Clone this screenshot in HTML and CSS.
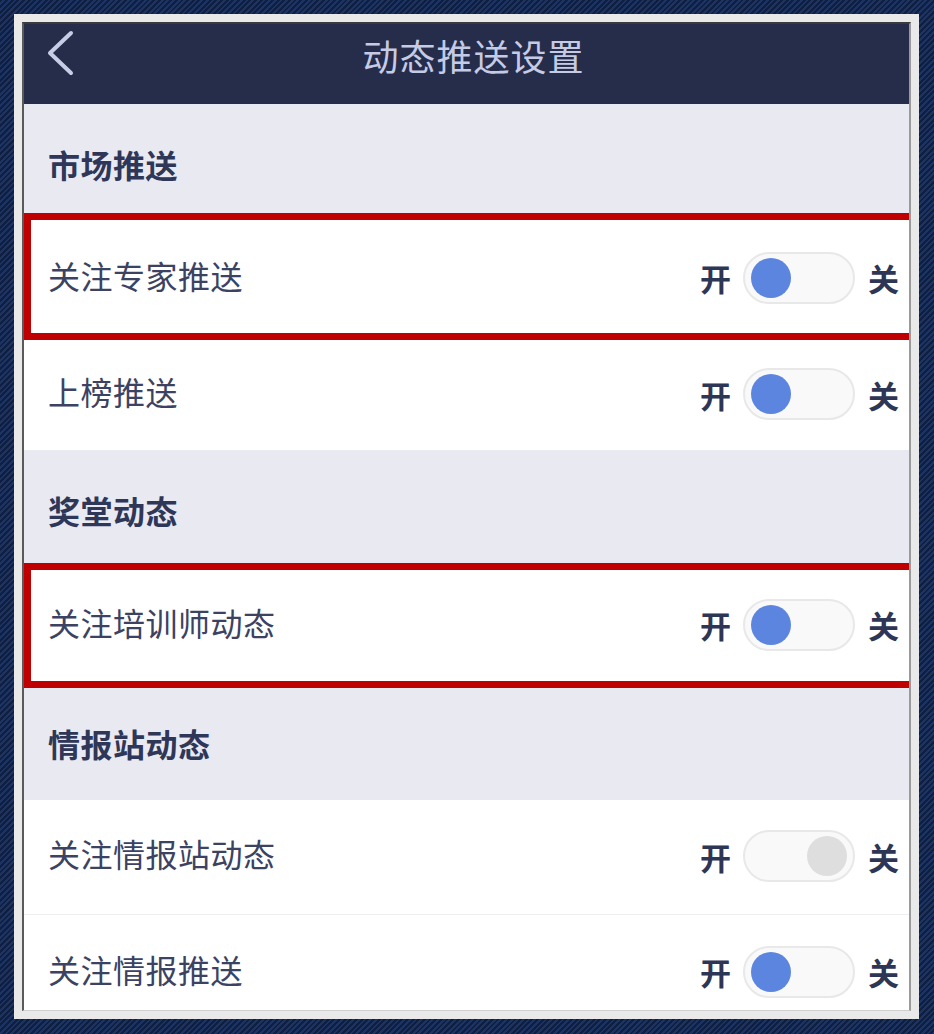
FILE: index.html
```html
<!DOCTYPE html>
<html lang="zh-CN">
<head>
<meta charset="utf-8">
<title>动态推送设置</title>
<link rel="stylesheet" href="styles.css">
</head>
<body>
<div class="frame">
  <div class="app">
    <header class="topbar">
      <svg class="back" width="30" height="46" viewBox="0 0 30 46"><path d="M26 3 L5 23 L26 43" fill="none" stroke="#c8cde6" stroke-width="4" stroke-linecap="round" stroke-linejoin="round"/></svg>
      <h1 class="title">动态推送设置</h1>
    </header>
    <div class="list">
      <div class="section s1">市场推送</div>
      <div class="row r1 hl"><span class="label">关注专家推送</span><div class="sw"><span class="k">开</span><span class="track on"><span class="knob"></span></span><span class="k">关</span></div></div>
      <div class="row r2"><span class="label">上榜推送</span><div class="sw"><span class="k">开</span><span class="track on"><span class="knob"></span></span><span class="k">关</span></div></div>
      <div class="section s2">奖堂动态</div>
      <div class="row r3 hl"><span class="label">关注培训师动态</span><div class="sw"><span class="k">开</span><span class="track on"><span class="knob"></span></span><span class="k">关</span></div></div>
      <div class="section s3">情报站动态</div>
      <div class="row r4 divided"><span class="label">关注情报站动态</span><div class="sw"><span class="k">开</span><span class="track off"><span class="knob"></span></span><span class="k">关</span></div></div>
      <div class="row r5"><span class="label">关注情报推送</span><div class="sw"><span class="k">开</span><span class="track on"><span class="knob"></span></span><span class="k">关</span></div></div>
    </div>
  </div>
</div>
</body>
</html>
```
FILE: styles.css
```css
* { box-sizing: border-box; }
html, body { margin: 0; height: 100%; }
body {
  width: 934px;
  height: 1034px;
  padding: 14px 15px 15px 14px;
  background: repeating-linear-gradient(135deg, #0e1f42 0 2px, #1d3361 2px 4px);
  font-family: "Noto Sans CJK SC", "Noto Sans", sans-serif;
  overflow: hidden;
}
.frame {
  height: 1005px;
  background: #e9e9e9;
  padding: 8px;
}
.app {
  height: 100%;
  border-left: 2px solid #5a5a5a;
  border-top: 2px solid #3a3a3a;
  border-right: 2px solid #9a9a9a;
  border-bottom: 1px solid #d0d0d0;
  overflow: hidden;
  display: flex;
  flex-direction: column;
  background: #fff;
}
.topbar {
  height: 80px;
  flex: none;
  background: #252d4b;
  display: flex;
  align-items: center;
  justify-content: center;
  position: relative;
}
.back { position: absolute; left: 21px; top: 6px; }
.title {
  margin: -18px 0 0 14px;
  font-size: 36px;
  font-weight: 400;
  color: #c6cbe5;
  letter-spacing: 1px;
}
.list { display: flex; flex-direction: column; flex: 1; min-height: 0; }
.section {
  background: #e9e9f2;
  color: #2f3758;
  font-size: 32px;
  letter-spacing: 0.5px;
  font-weight: 700;
  padding-left: 24px;
  display: flex;
  align-items: center;
  flex: none;
}
.s1 { height: 109px; padding-top: 10px; }
.s2 { height: 113px; padding-top: 6px; }
.s3 { height: 112px; padding-bottom: 2px; }
.row {
  background: #fff;
  display: flex;
  align-items: center;
  justify-content: space-between;
  padding: 0 10px 0 24px;
  flex: none;
}
.r1 { height: 127px; }
.r2 { height: 110px; }
.r3 { height: 125px; }
.r4 { height: 115px; }
.r5 { height: 115px; }
.divided { border-bottom: 1px solid #eeeef2; }
.hl {
  outline: 7px solid #c00000;
  outline-offset: -7px;
  margin-right: -12px;
  padding-right: 22px;
}
.label {
  font-size: 32px;
  letter-spacing: 0.5px;
  color: #3b4262;
  margin-top: -8px;
}
.r1 .label { margin-top: -4px; }
.r3 .label { margin-top: -7px; }
.sw { display: flex; align-items: center; margin-top: -2px; }
.r1 .sw { margin-top: 2px; }
.k { font-size: 31px; font-weight: 700; color: #2e3656; }
.track {
  width: 112px;
  height: 52px;
  border-radius: 26px;
  border: 2px solid #e8e8e8;
  background: #f9f9f9;
  margin: 0 13px 0 12px;
  display: flex;
  align-items: center;
  padding: 0 6px;
}
.knob { width: 40px; height: 40px; border-radius: 50%; }
.on .knob { background: #5b85df; }
.off { justify-content: flex-end; }
.off .knob { background: #dedede; }
```
